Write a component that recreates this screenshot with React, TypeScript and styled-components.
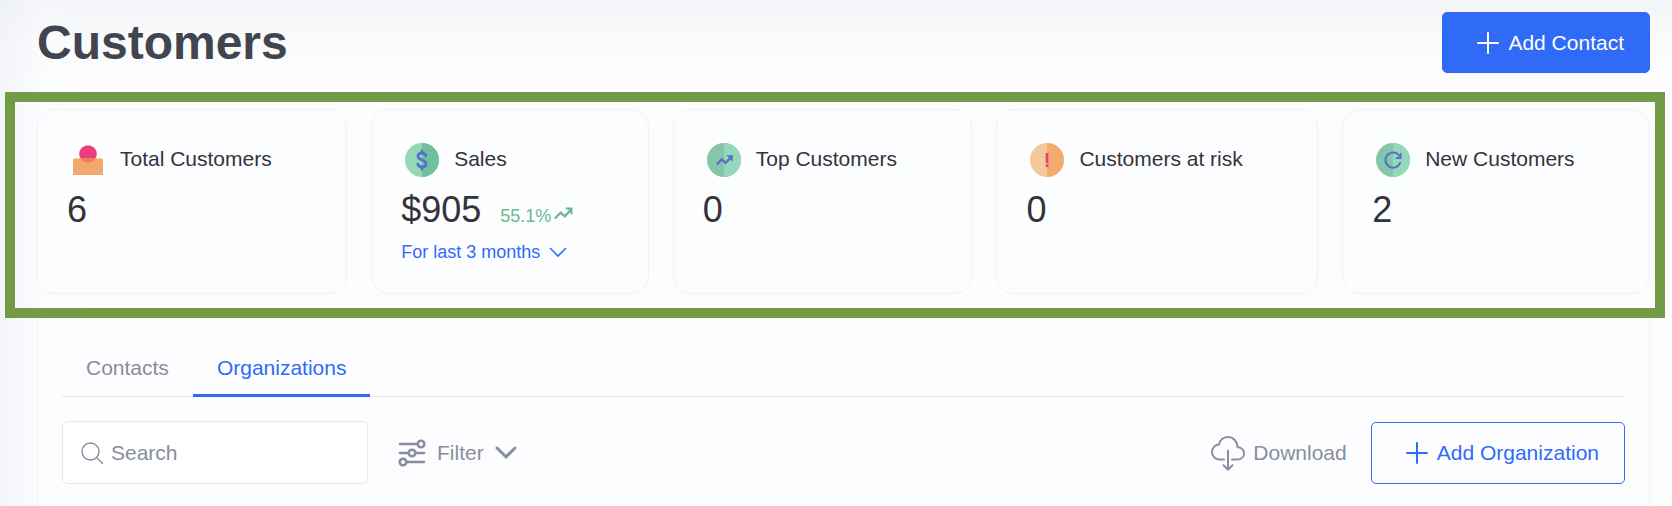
import React from "react";
import styled, { createGlobalStyle } from "styled-components";

const blue = "#2f6bf7";
const slate = "#858fa1";
const ink = "#35333a";

const GlobalStyle = createGlobalStyle`
  *, *::before, *::after { box-sizing: border-box; }
  body {
    margin: 0;
    background: #fdfdfe;
    color: ${ink};
    font: 21px/24px "Liberation Sans", Arial, sans-serif;
  }
  button, input, select { font: inherit; color: inherit; }
  svg { display: block; flex: none; }
`;

const Page = styled.main`
  display: flex;
  flex-direction: column;
  min-height: 100vh;
  background:
    linear-gradient(to right, rgba(236, 239, 244, 0.6), rgba(248, 251, 255, 0.3) 45px, transparent 85px),
    linear-gradient(to bottom, #f2f4f7, #fafbfc 45px, #fdfdfe 85px);
`;

const Header = styled.header`
  display: flex;
  align-items: center;
  justify-content: space-between;
  padding: 12px 22px 19px 37px;
`;

const Title = styled.h1`
  margin: 0;
  color: #42444f;
  font-size: 48px;
  line-height: 56px;
`;

const ActionButton = styled.button<{ $filled?: boolean }>`
  display: flex;
  align-items: center;
  gap: 8px;
  height: ${(p) => (p.$filled ? 61 : 62)}px;
  padding: 0 25px 0 33px;
  border: 1px solid ${blue};
  border-radius: 5px;
  background: ${(p) => (p.$filled ? blue : "#fdfdff")};
  color: ${(p) => (p.$filled ? "#ffffff" : blue)};
  white-space: nowrap;
`;

const Highlight = styled.section`
  display: flex;
  gap: 24px;
  margin: 0 7px 0 5px;
  padding: 7px 5px 14px 22px;
  border: 10px solid #729b45;
`;

const Card = styled.article`
  flex: 1 1 auto;
  display: flex;
  flex-direction: column;
  gap: 10px;
  padding: 29px 29px 30px;
  border: 1px solid #f1f1fc;
  border-radius: 18px;
  background: #fcfdff;
`;

const CardHead = styled.div`
  display: flex;
  align-items: center;
  gap: 11px;
  height: 40px;
`;

const IconSlot = styled.span`
  display: flex;
  justify-content: center;
  width: 42px;
  padding-top: 2px;
`;

const CardLabel = styled.h2`
  margin: 0;
  font-size: 21px;
  font-weight: 400;
  line-height: 24px;
  white-space: nowrap;
`;

const ValueRow = styled.div`
  display: flex;
  align-items: baseline;
  gap: 19px;
`;

const Value = styled.span`
  font-size: 36px;
  line-height: 42px;
`;

const Trend = styled.span`
  display: flex;
  align-items: center;
  gap: 3px;
  color: #67bb92;
  font-size: 18px;
  line-height: 22px;
  svg { margin-bottom: 6px; }
`;

const Period = styled.label`
  display: flex;
  align-items: center;
  gap: 8px;
  color: ${blue};
  font-size: 18px;
  line-height: 22px;
`;

const PeriodSelect = styled.select`
  appearance: none;
  height: 22px;
  margin: 0;
  padding: 0;
  border: 0;
  background: transparent;
`;

const Panel = styled.section`
  flex: 1;
  margin: 0 22px 0 37px;
  padding: 24px 24px 22px;
  border: solid #f0f1f9;
  border-width: 0 1px;
  background: rgba(252, 253, 255, 0.8);
`;

const Tabs = styled.div`
  display: flex;
  box-shadow: inset 0 -1px #e5e7ea;
`;

const Tab = styled.button<{ $active?: boolean }>`
  padding: 14px 24px;
  border: 0;
  border-bottom: 3px solid ${(p) => (p.$active ? blue : "transparent")};
  background: none;
  color: ${(p) => (p.$active ? blue : "#858f99")};
`;

const Toolbar = styled.div`
  display: flex;
  align-items: center;
  justify-content: space-between;
  margin-top: 24px;
`;

const ToolGroup = styled.div<{ $gap: number }>`
  display: flex;
  align-items: center;
  gap: ${(p) => p.$gap}px;
`;

const SearchBox = styled.label`
  display: flex;
  align-items: center;
  gap: 8px;
  width: 306px;
  height: 63px;
  padding: 0 18px;
  border: 1px solid #e6e7ea;
  border-radius: 6px;
  background: #ffffff;
  color: ${slate};
`;

const SearchInput = styled.input`
  flex: 1;
  min-width: 0;
  padding: 0;
  border: 0;
  outline: 0;
  background: transparent;
  &::placeholder { color: ${slate}; opacity: 1; }
`;

const ToolButton = styled.button<{ $gap: number }>`
  display: flex;
  align-items: center;
  gap: ${(p) => p.$gap}px;
  padding: 0;
  border: 0;
  background: none;
  color: ${slate};
`;

const Plus = () => (
  <svg width="24" height="24" viewBox="0 0 24 24" fill="none" stroke="currentColor" strokeWidth="2" strokeLinecap="round" aria-hidden="true">
    <path d="M12 2v20M2 12h20" />
  </svg>
);

const PersonIcon = () => (
  <svg width="30" height="30" viewBox="0 0 30 30" aria-hidden="true">
    <circle cx="15" cy="9" r="8.8" fill="#ea3d79" />
    <path d="M0 30V15.500Q0 13.500 2 13.500H28Q30 13.500 30 15.500V30Z" fill="#f2a86b" />
    <path d="M7.500 13.500H22.500A8.800 8.800 0 0 1 7.500 13.500Z" fill="#ed7f51" />
  </svg>
);

type DiscProps = { left: string; right: string; children: React.ReactNode };

const Disc = ({ left, right, children }: DiscProps) => (
  <svg width="34" height="34" viewBox="0 0 34 34" fill="none" strokeLinecap="round" aria-hidden="true">
    <circle cx="17" cy="17" r="17" fill={left} />
    <path d="M17 0a17 17 0 0 1 0 34z" fill={right} />
    {children}
  </svg>
);

const SalesIcon = () => (
  <Disc left="#93d8b9" right="#72bf9c">
    <path d="M21 12.800C20.400 11 19 10.200 17 10.200C14.600 10.200 13 11.400 13 13.300C13 15.600 14.700 16.300 17 17C19.300 17.700 21 18.500 21 20.700C21 22.700 19.400 23.900 17 23.900C14.900 23.900 13.400 23 12.800 21.200M17 7.800v2.400M17 23.900v2.400" stroke="#5571c8" strokeWidth="2.700" />
  </Disc>
);

const TopIcon = () => (
  <Disc left="#85c6aa" right="#93d9ba">
    <path d="M10.500 20.600l4.300-4.300 3.800 3.500 4.800-4.600" stroke="#5571c8" strokeWidth="2.400" />
    <path d="M19.300 12.300h6.500v6.500z" fill="#5571c8" />
  </Disc>
);

const RiskIcon = () => (
  <Disc left="#f5c89d" right="#f2ad6b">
    <path d="M15.700 10h2.700v10.200h-2.700zM15.700 21.500h2.700v2.500h-2.700z" fill="#ea3d79" />
  </Disc>
);

const NewIcon = () => (
  <Disc left="#85c6aa" right="#93d9ba">
    <path d="M23.300 12.700A7.600 7.600 0 1 0 24.100 20" stroke="#5571c8" strokeWidth="2" />
    <path d="M25.600 10v5.900h-5.900v-1.600h2.100l2.200-2.300V10z" fill="#5571c8" />
  </Disc>
);

const TrendArrow = () => (
  <svg width="19" height="13" viewBox="0 0 19 13" fill="none" aria-hidden="true">
    <path d="M0.800 11.500l6-5.800 3.900 3.700 5.500-5.800" stroke="currentColor" strokeWidth="2.300" />
    <path d="M11.800 0.600H18.500V7.200H16.500V4.600L14.200 2.600H11.800z" fill="currentColor" />
  </svg>
);

const Chevron = ({ bold }: { bold?: boolean }) => (
  <svg width={bold ? 22 : 18} height={bold ? 13 : 11} viewBox={bold ? "0 0 22 13" : "0 0 18 11"} fill="none" stroke="currentColor" strokeWidth={bold ? 3 : 1.6} strokeLinecap="round" aria-hidden="true">
    <path d={bold ? "M2 2l9 8.800L20 2" : "M1.500 1.500L9 9l7.500-7.500"} />
  </svg>
);

const SearchIcon = () => (
  <svg width="22" height="22" viewBox="0 0 22 22" fill="none" stroke="currentColor" strokeWidth="1.400" strokeLinecap="round" aria-hidden="true">
    <circle cx="9.500" cy="9.500" r="8.500" />
    <path d="M15.500 15.500l5.800 5.800" />
  </svg>
);

const FilterIcon = () => (
  <svg width="28" height="28" viewBox="0 0 28 28" fill="none" stroke="currentColor" strokeWidth="2.600" strokeLinecap="round" aria-hidden="true">
    <path d="M2 5h17M2 14h8M18 14h8M9 23h17" />
    <circle cx="23" cy="5" r="3.300" />
    <circle cx="14" cy="14" r="3.300" />
    <circle cx="5" cy="23" r="3.300" />
  </svg>
);

const CloudIcon = () => (
  <svg width="34" height="36" viewBox="0 0 34 36" fill="none" stroke="currentColor" strokeWidth="2" strokeLinecap="round" strokeLinejoin="round" aria-hidden="true">
    <path d="M13 24.500H9C4.600 24.500 1 21.400 1 17C1 12.900 4 9.800 8 9.600C8.800 5 12.500 2 17 2C22 2 26.200 5.800 26.500 12.300C30 12.200 33 14.600 33 18.300C33 22 30.200 24.500 26.500 24.500H21" />
    <path d="M17 15.500V34.500M12.500 30.200L17 34.700L21.500 30.200" />
  </svg>
);

type StatCardProps = { icon: React.ReactNode; label: string; value: string; trend?: string; period?: string };

const StatCard = ({ icon, label, value, trend, period }: StatCardProps) => (
  <Card>
    <CardHead>
      <IconSlot>{icon}</IconSlot>
      <CardLabel>{label}</CardLabel>
    </CardHead>
    <ValueRow>
      <Value>{value}</Value>
      {trend && (
        <Trend>
          {trend}
          <TrendArrow />
        </Trend>
      )}
    </ValueRow>
    {period && (
      <Period>
        <PeriodSelect aria-label="Sales period">
          <option>{period}</option>
        </PeriodSelect>
        <Chevron />
      </Period>
    )}
  </Card>
);

export default function App() {
  return (
    <>
      <GlobalStyle />
      <Page>
        <Header>
          <Title>Customers</Title>
          <ActionButton $filled type="button">
            <Plus />
            Add Contact
          </ActionButton>
        </Header>
        <Highlight>
          <StatCard icon={<PersonIcon />} label="Total Customers" value="6" />
          <StatCard icon={<SalesIcon />} label="Sales" value="$905" trend="55.1%" period="For last 3 months" />
          <StatCard icon={<TopIcon />} label="Top Customers" value="0" />
          <StatCard icon={<RiskIcon />} label="Customers at risk" value="0" />
          <StatCard icon={<NewIcon />} label="New Customers" value="2" />
        </Highlight>
        <Panel>
          <Tabs role="tablist">
            <Tab type="button" role="tab" aria-selected="false">Contacts</Tab>
            <Tab $active type="button" role="tab" aria-selected="true">Organizations</Tab>
          </Tabs>
          <Toolbar>
            <ToolGroup $gap={30}>
              <SearchBox>
                <SearchIcon />
                <SearchInput type="text" placeholder="Search" aria-label="Search" />
              </SearchBox>
              <ToolButton type="button" $gap={11}>
                <FilterIcon />
                Filter
                <Chevron bold />
              </ToolButton>
            </ToolGroup>
            <ToolGroup $gap={24}>
              <ToolButton type="button" $gap={8}>
                <CloudIcon />
                Download
              </ToolButton>
              <ActionButton type="button">
                <Plus />
                Add Organization
              </ActionButton>
            </ToolGroup>
          </Toolbar>
        </Panel>
      </Page>
    </>
  );
}
